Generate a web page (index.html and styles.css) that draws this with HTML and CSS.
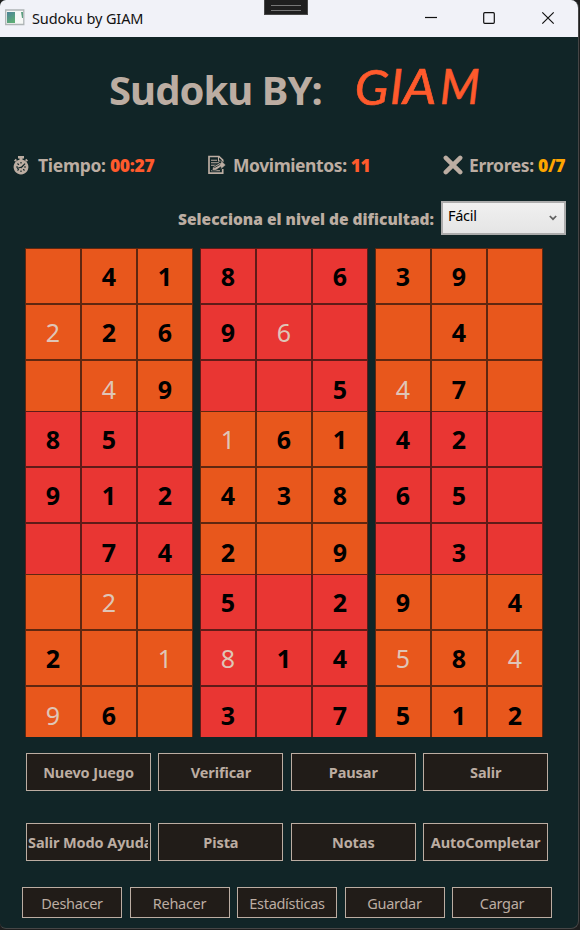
FILE: index.html
```html
<!DOCTYPE html>
<html lang="es">
<head>
<meta charset="utf-8">
<title>Sudoku by GIAM</title>
<link rel="stylesheet" href="styles.css">
</head>
<body>
<div class="window">
  <header class="titlebar">
    <svg class="app-icon" width="20" height="17" viewBox="0 0 20 17"><defs><linearGradient id="g" x1="0" y1="0" x2="0.5" y2="1"><stop offset="0" stop-color="#4c8299"/><stop offset="1" stop-color="#5dac76"/></linearGradient></defs><path d="M.7 1h18.1v14.5H.7z" fill="#f6f8f6" stroke="#aeb4b5" stroke-width="1.3"/><path d="M2 3h8v11H2z" fill="url(#g)"/><path d="M16 3h2v6h-1z" fill="#5b9e80"/></svg>
    <span class="caption">Sudoku by GIAM</span>
    <svg class="controls" width="140" height="37" viewBox="0 0 140 37" fill="none" stroke="#111" stroke-width="1.2"><path d="M5 17.5h12"/><rect x="63.7" y="12.7" width="10.6" height="10.6" rx="1"/><path d="M122.3 12.3l11.4 11.4M133.7 12.3l-11.4 11.4"/></svg>
    <div class="grip"></div>
  </header>
  <h1 class="heading"><span class="name">Sudoku BY:</span><span class="brand"><i class="first">G</i><i class="stem">I</i><i class="mid">A</i><i class="last">M</i></span></h1>
  <section class="stats">
    <div class="stat time">
      <svg width="18" height="20" viewBox="0 0 18 20"><path d="M6 1h6v2.4H10.5v1.4A7.4 7.4 0 1 1 7.5 4.8V3.4H6z" fill="#bcada2"/><path d="M14.2 3.8l1.8 1.7-1.2 1.2-1.8-1.5zM3.8 3.8L2 5.5l1.2 1.2L5 5.2z" fill="#bcada2"/><path d="M8.7 13l4.4-4.4M9 7v1.6M9 15.4V17M4 12h2M12 12h2M5.5 8.5l1.3 1.3M5.5 15.5l1.3-1.3M11.2 14.2l1.3 1.3M5 13.5l6-2" stroke="#112527" stroke-width="1.2"/></svg>
      <span>Tiempo: <b>00:27</b></span>
    </div>
    <div class="stat moves">
      <svg width="20" height="20" viewBox="0 0 20 20" fill="none" stroke="#bcada2"><path d="M15.7 7.1V5L12 1.5H2V18.2H15.7V14" stroke-width="1.7"/><path d="M11.5 1v5H16" stroke-width="1.1"/><path d="M4 5.2h6M4 7.7h8M4 10.3h5M4 15.8h9" stroke-width="1.1"/><path d="M5 15.5l1-3.5 6.3-4.1h1.5v-2.8l5 5-5 4.4v-2.6L9 15.2z" fill="#bcada2" stroke="#112527" stroke-width=".7"/><path d="M7.2 12.8l6-3.4" stroke="#112527" stroke-width=".8"/></svg>
      <span>Movimientos: <b>11</b></span>
    </div>
    <div class="stat errors">
      <svg width="20" height="20" viewBox="0 0 20 20"><path d="M2.8 2.8l14.4 14.4M17.2 2.8L2.8 17.2" stroke="#bcada2" stroke-width="4.5" stroke-linecap="round"/></svg>
      <span>Errores: <b>0/7</b></span>
    </div>
  </section>
  <section class="level">
    <span class="level-label">Selecciona el nivel de dificultad:</span>
    <div class="select"><span>Fácil</span><svg width="8" height="6" viewBox="0 0 8 6"><path d="M.8 1L4 4.2 7.2 1" fill="none" stroke="#606060" stroke-width="1.7"/></svg></div>
  </section>
  <main class="board">
    <div class="block"><b></b><b>4</b><b>1</b><i>2</i><b>2</b><b>6</b><b></b><i>4</i><b>9</b></div>
    <div class="block red"><b>8</b><b></b><b>6</b><b>9</b><i>6</i><b></b><b></b><b></b><b>5</b></div>
    <div class="block"><b>3</b><b>9</b><b></b><b></b><b>4</b><b></b><i>4</i><b>7</b><b></b></div>
    <div class="block red"><b>8</b><b>5</b><b></b><b>9</b><b>1</b><b>2</b><b></b><b>7</b><b>4</b></div>
    <div class="block"><i>1</i><b>6</b><b>1</b><b>4</b><b>3</b><b>8</b><b>2</b><b></b><b>9</b></div>
    <div class="block red"><b>4</b><b>2</b><b></b><b>6</b><b>5</b><b></b><b></b><b>3</b><b></b></div>
    <div class="block"><b></b><i>2</i><b></b><b>2</b><b></b><i>1</i><i>9</i><b>6</b><b></b></div>
    <div class="block red"><b>5</b><b></b><b>2</b><i>8</i><b>1</b><b>4</b><b>3</b><b></b><b>7</b></div>
    <div class="block"><b>9</b><b></b><b>4</b><i>5</i><b>8</b><i>4</i><b>5</b><b>1</b><b>2</b></div>
  </main>
  <nav class="actions">
    <button><span>Nuevo Juego</span></button><button><span>Verificar</span></button><button><span>Pausar</span></button><button><span>Salir</span></button>
    <button class="long"><span>Salir Modo Ayuda</span></button><button><span>Pista</span></button><button><span>Notas</span></button><button><span>AutoCompletar</span></button>
  </nav>
  <nav class="tools">
    <button>Deshacer</button><button>Rehacer</button><button>Estadísticas</button><button>Guardar</button><button>Cargar</button>
  </nav>
</div>
</body>
</html>
```
FILE: styles.css
```css
* { box-sizing: border-box; }
body {
  margin: 0;
  width: 580px;
  height: 930px;
  overflow: hidden;
  background: #1e1e1e;
  font-family: "Noto Sans", "Open Sans", sans-serif;
  color: #bcada2;
}
.window {
  position: relative;
  width: 579px;
  height: 929px;
  background: #112527;
  border-right: 1px solid #464646;
  border-bottom: 1px solid #464646;
  border-radius: 6px 8px 8px 6px;
  overflow: hidden;
}
.titlebar {
  display: flex;
  align-items: center;
  height: 37px;
  padding-left: 5px;
  background: #f1f2f8;
  color: #111;
}
.app-icon { margin-top: -2px; }
.caption {
  margin: -2px 0 0 7px;
  font-size: 14.5px;
  letter-spacing: -0.1px;
  white-space: nowrap;
}
.controls { margin-left: auto; margin-right: 18px; }
.grip {
  position: absolute;
  left: 264px;
  top: 0;
  width: 44px;
  height: 15px;
  background: #1f1f1f;
  border: 1px solid #484848;
  border-top: 0;
}
.grip::after {
  content: "";
  display: block;
  width: 30px;
  height: 4px;
  margin: 5px auto 0;
  border: 1px solid #777;
  border-width: 1px 0;
}
.heading {
  display: flex;
  align-items: center;
  height: 106px;
  margin: 0 0 2px;
  padding-left: 109px;
  line-height: 1;
}
.name { width: 246px; font-size: 40px; letter-spacing: -0.95px; white-space: nowrap; }
.brand {
  display: flex;
  align-items: flex-end;
  height: 50px;
  margin-top: -11px;
  font-family: Lato, sans-serif;
  font-weight: 400;
  font-size: 48px;
  color: #ff5a2c;
  -webkit-text-stroke: 0.7px #ff5a2c;
}
.brand i { display: block; transform-origin: 0 50%; }
.brand .first { width: 35px; transform: scaleX(1.04) rotate(2deg); }
.brand .stem { width: 13px; }
.brand .mid { width: 37px; transform: scaleX(1.1); }
.brand .last { transform: scaleX(0.96); }
.stats {
  display: grid;
  grid-template-columns: 195px 236px 1fr;
  height: 40px;
  margin-bottom: 2px;
  align-items: center;
  padding-left: 12px;
  font-size: 17.5px;
  font-weight: 700;
  white-space: nowrap;
}
.stat { display: flex; align-items: center; gap: 6px; letter-spacing: -0.42px; }
.stat.time { gap: 8px; letter-spacing: -0.3px; }
.stat b { color: #ff5a2c; }
.stat.errors { letter-spacing: -0.35px; }
.stat.errors b { color: #ffa500; }
.level {
  display: flex;
  align-items: center;
  justify-content: flex-end;
  height: 61px;
  padding: 1px 12px 0 0;
}
.level-label {
  margin: 2px 7px 0 0;
  font-size: 15.5px;
  font-weight: 900;
  letter-spacing: 0;
  white-space: nowrap;
}
.select {
  display: flex;
  justify-content: space-between;
  width: 125px;
  height: 34px;
  margin-top: -1px;
  padding: 4px 7px 0 5px;
  border: 2px solid #acacac;
  background: linear-gradient(#f0f0f0, #e5e5e5);
  color: #000;
  font-size: 14.5px;
  line-height: 17px;
  letter-spacing: -0.3px;
}
.select svg { margin-top: 8px; }
.board {
  display: grid;
  grid-template-columns: repeat(3, 168px);
  grid-auto-rows: 163px;
  column-gap: 7px;
  padding-left: 25px;
}
.block {
  display: grid;
  grid-template: repeat(3, 56px) / repeat(3, 56px);
  overflow: hidden;
  background: #e8571c;
  font-size: 25px;
  line-height: 55px;
  text-align: center;
}
.red { background: #e93633; }
.block > * { border: 1px solid rgba(17, 12, 10, 0.64); }
.block b { color: #000; }
.block i { font-style: normal; color: #dfc5b7; }
.block > :nth-child(n+7) { line-height: 57px; }
.actions {
  display: grid;
  grid-template-columns: repeat(4, 125px);
  grid-auto-rows: 38px;
  gap: 32px 7.4px;
  padding: 16px 0 0 26px;
}
.tools {
  display: grid;
  grid-template-columns: repeat(5, 100px);
  grid-auto-rows: 31px;
  gap: 7.5px;
  padding: 26px 0 0 22px;
}
button {
  overflow: hidden;
  padding: 0;
  border: 1px solid #bcada2;
  background: #211c18;
  color: #bcada2;
  font: 700 14.5px/36px "Noto Sans", "Open Sans", sans-serif;
  letter-spacing: -0.1px;
  white-space: nowrap;
}
.long { padding: 0 2px 0 1px; text-align: left; }
.long span { display: block; overflow: hidden; }
.tools button { padding-top: 1px; font-weight: 400; line-height: 28px; letter-spacing: -0.3px; }
```
